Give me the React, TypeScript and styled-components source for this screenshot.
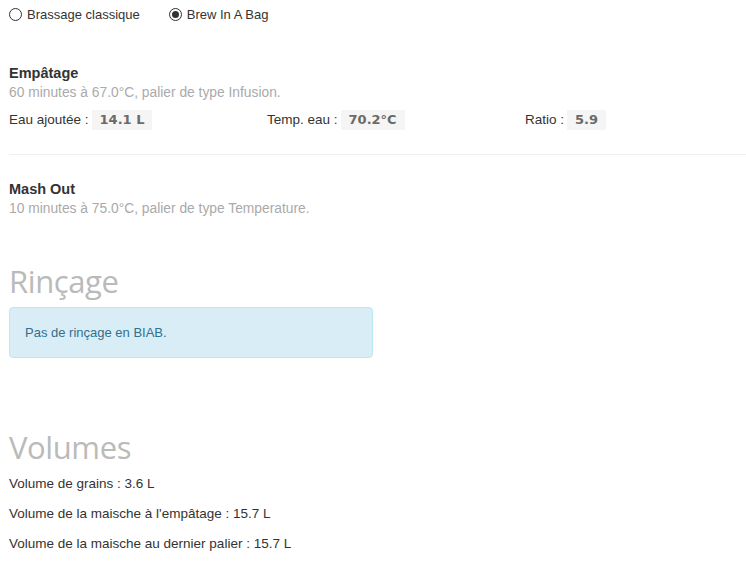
import React, { useState } from 'react';
import styled, { createGlobalStyle } from 'styled-components';

const GlobalStyle = createGlobalStyle`
  html, body {
    margin: 0;
    padding: 0;
    background: #ffffff;
  }
  body {
    font-family: "Liberation Sans", Arial, sans-serif;
    font-size: 13.5px;
    color: #333333;
  }
`;

const Page = styled.div`
  padding: 0 0 0 9px;
`;

const RadioRow = styled.div`
  display: flex;
  align-items: center;
  height: 28px;
  gap: 29px;
  font-size: 13px;
`;

const RadioLabel = styled.label`
  display: flex;
  align-items: center;
  gap: 5px;
  cursor: pointer;
  color: #333333;
`;

const RadioDot = styled.span<{ $checked: boolean }>`
  width: 11px;
  height: 11px;
  border: 1px solid #333333;
  border-radius: 50%;
  display: flex;
  align-items: center;
  justify-content: center;

  &::after {
    content: '';
    width: 7px;
    height: 7px;
    border-radius: 50%;
    background: ${(p) => (p.$checked ? '#333333' : 'transparent')};
  }
`;

const Step = styled.div<{ $top: number }>`
  margin-top: ${(p) => p.$top}px;
`;

const StepTitle = styled.div`
  font-weight: bold;
  font-size: 14.5px;
  line-height: 20px;
  color: #333333;
`;

const StepDesc = styled.div`
  line-height: 20px;
  font-size: 13.8px;
  color: #aaaaaa;
`;

const InfoRow = styled.div`
  display: grid;
  grid-template-columns: 258px 258px 1fr;
  margin-top: 7px;
  line-height: 20px;
`;

const InfoItem = styled.div`
  display: flex;
  align-items: center;
  gap: 3px;
`;

const Badge = styled.span`
  background: #f5f5f5;
  color: #6a6a6a;
  font-family: "DejaVu Sans", Verdana, sans-serif;
  font-weight: bold;
  font-size: 13px;
  padding: 0 8px;
  line-height: 20px;
`;

const Divider = styled.hr`
  border: none;
  border-top: 1px solid #eeeeee;
  margin: 24px 0 0 0;
`;

const SectionHeading = styled.h2<{ $top: number }>`
  font-family: "Open Sans", sans-serif;
  font-weight: 400;
  font-size: 31px;
  line-height: 36px;
  color: #bababa;
  margin: ${(p) => p.$top}px 0 0 0;
  letter-spacing: -0.4px;
`;

const InfoAlert = styled.div`
  width: 332px;
  margin-top: 8px;
  padding: 15px;
  background: #d9edf7;
  border: 1px solid #bce8f1;
  border-radius: 4px;
  color: #31708f;
  font-size: 13px;
  line-height: 19px;
`;

const VolumeLine = styled.p`
  margin: 10px 0 0 0;
  line-height: 20px;
  color: #333333;

  &:first-of-type {
    margin-top: 9px;
  }
`;

export default function App() {
  const [mode, setMode] = useState<'classic' | 'biab'>('biab');

  return (
    <>
      <GlobalStyle />
      <Page>
        <RadioRow>
          <RadioLabel onClick={() => setMode('classic')}>
            <RadioDot $checked={mode === 'classic'} />
            Brassage classique
          </RadioLabel>
          <RadioLabel onClick={() => setMode('biab')}>
            <RadioDot $checked={mode === 'biab'} />
            Brew In A Bag
          </RadioLabel>
        </RadioRow>

        <Step $top={35}>
          <StepTitle>Empâtage</StepTitle>
          <StepDesc>60 minutes à 67.0°C, palier de type Infusion.</StepDesc>
          <InfoRow>
            <InfoItem>
              Eau ajoutée : <Badge>14.1 L</Badge>
            </InfoItem>
            <InfoItem>
              Temp. eau : <Badge>70.2°C</Badge>
            </InfoItem>
            <InfoItem>
              Ratio : <Badge>5.9</Badge>
            </InfoItem>
          </InfoRow>
        </Step>

        <Divider />

        <Step $top={24}>
          <StepTitle>Mash Out</StepTitle>
          <StepDesc>10 minutes à 75.0°C, palier de type Temperature.</StepDesc>
        </Step>

        <SectionHeading $top={44}>Rinçage</SectionHeading>
        <InfoAlert>Pas de rinçage en BIAB.</InfoAlert>

        <SectionHeading $top={71}>Volumes</SectionHeading>
        <VolumeLine>Volume de grains : 3.6 L</VolumeLine>
        <VolumeLine>Volume de la maische à l'empâtage : 15.7 L</VolumeLine>
        <VolumeLine>Volume de la maische au dernier palier : 15.7 L</VolumeLine>
      </Page>
    </>
  );
}
